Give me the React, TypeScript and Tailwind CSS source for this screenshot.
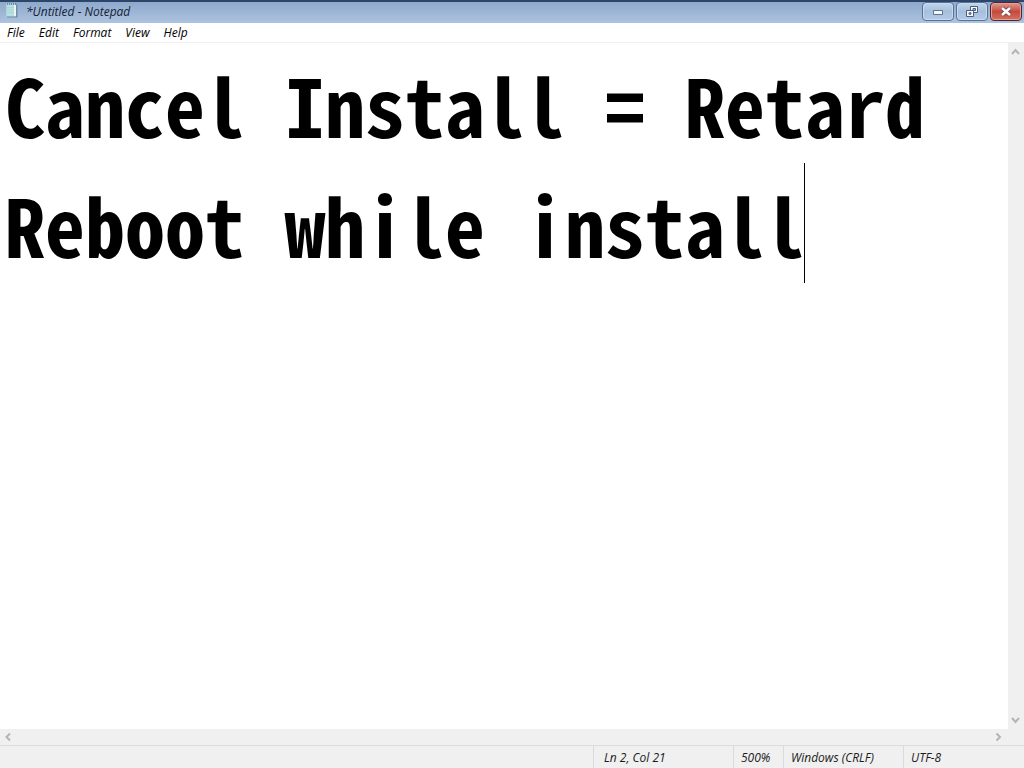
import { useState } from "react";

const menus = ["File", "Edit", "Format", "View", "Help"];

function NotepadIcon() {
  return (
    <svg className="h-4 w-4 shrink-0" viewBox="0 0 16 16" aria-hidden="true">
      <path d="M3 2.5h10.5v13H3z" fill="#6f8fa0" />
      <path d="M2 1.5h10v13H2z" fill="#a9d5dc" />
      <path d="M3 3h7v11H3z" fill="#b9dfe2" />
      <path d="M10 3h2v11h-2z" fill="#e9f6f4" />
      <path d="M3 5.5h7M3 8h7M3 10.5h7" stroke="#a3cfd6" strokeWidth="0.6" />
      <path d="M3 2h10" stroke="#5f7788" strokeWidth="1.4" strokeDasharray="1 1" />
    </svg>
  );
}

function ScrollArrow({ label, d }: { label: string; d: string }) {
  return (
    <button type="button" aria-label={label} className="flex h-4 w-4 items-center justify-center">
      <svg className="h-4 w-4" viewBox="0 0 16 16" fill="none" stroke="#b4b4b4" strokeWidth="2">
        <path d={d} />
      </svg>
    </button>
  );
}

const captionButton =
  "flex h-[19px] w-8 items-center justify-center rounded-sm border border-[#56749b] bg-linear-to-b from-[#c3d5ea] via-[#a6bfdd] to-[#b4cbe6] shadow-[inset_0_0_0_1px_#c9daee]";

export default function App() {
  const [text, setText] = useState("Cancel Install = Retard\nReboot while install");
  const lines = text.split("\n");
  const lastLine = lines[lines.length - 1];

  return (
    <div className="flex h-screen flex-col overflow-hidden bg-white font-['Open_Sans','Noto_Sans',sans-serif] text-xs text-black italic">
      <header className="flex h-[23px] shrink-0 items-start border-t-2 border-[#2c4568] bg-linear-to-b from-[#8ea9cc] to-[#adc3df] pr-0.5 pl-1">
        <NotepadIcon />
        <h1 className="ml-1.5 flex-1 text-xs leading-5 text-[#142138]">*Untitled - Notepad</h1>
        <div className="flex gap-0.5">
          <button type="button" aria-label="Minimize" className={captionButton}>
            <svg className="h-3 w-3" viewBox="0 0 12 12">
              <path d="M1.5 4.5h9v4h-9z" fill="#f5f9fe" stroke="#5b7492" />
            </svg>
          </button>
          <button type="button" aria-label="Restore" className={captionButton}>
            <svg className="h-3 w-3" viewBox="0 0 12 12" fill="#f5f9fe" stroke="#4b5f7a">
              <path d="M4.5 .5h7v6h-7z" />
              <path d="M7 2.5h2.5v2H7z" fill="#a6bfdd" />
              <path d="M.5 4.5h7v6h-7z" />
              <path d="M3 6.8h2v1.4H3z" fill="#a6bfdd" />
            </svg>
          </button>
          <button
            type="button"
            aria-label="Close"
            className="flex h-[19px] w-8 items-center justify-center rounded-sm border border-[#572332] bg-linear-to-b from-[#dc9a94] via-[#c44a3c] to-[#d5705c] shadow-[inset_0_0_0_1px_#e0a196]"
          >
            <svg className="h-3 w-3" viewBox="0 0 12 12">
              <path d="m2 2 8 7m0-7-8 7" stroke="#6b3944" strokeWidth="4" />
              <path d="m2 2 8 7m0-7-8 7" stroke="#ffffff" strokeWidth="2.6" />
            </svg>
          </button>
        </div>
      </header>

      <nav className="flex h-5 shrink-0 items-center gap-3.5 border-b border-[#f0f0f0] px-[7px]">
        {menus.map((menu) => (
          <button key={menu} type="button">
            {menu}
          </button>
        ))}
      </nav>

      <main className="flex min-h-0 flex-1">
        <div className="relative min-w-0 flex-1">
          <textarea
            aria-label="Document"
            wrap="off"
            spellCheck={false}
            value={text}
            onChange={(event) => setText(event.target.value)}
            className="block h-full w-full resize-none overflow-hidden bg-white pl-[5px] font-['Noto_Sans_Mono_CJK_SC','Liberation_Mono',monospace] text-[80px] leading-[120px] font-bold whitespace-pre text-black not-italic caret-transparent outline-none"
          />
          <div
            aria-hidden="true"
            className="pointer-events-none absolute top-[120px] left-1 flex h-[120px] w-max border-r border-black font-['Noto_Sans_Mono_CJK_SC','Liberation_Mono',monospace] text-[80px] leading-[120px] font-bold whitespace-pre not-italic"
          >
            <span className="invisible">{lastLine}</span>
          </div>
        </div>
        <div className="flex w-4 shrink-0 flex-col justify-between bg-[#f0f0f0]">
          <ScrollArrow label="Scroll up" d="m4 11 3.5-4 3.5 4" />
          <ScrollArrow label="Scroll down" d="m4 5 3.5 4 3.5-4" />
        </div>
      </main>

      <div className="flex h-4 shrink-0 items-center justify-between bg-[#f0f0f0] pr-[17px]">
        <ScrollArrow label="Scroll left" d="M10 4.5 6.5 8l3.5 3.5" />
        <ScrollArrow label="Scroll right" d="M5.5 4.5 9 8l-3.5 3.5" />
      </div>

      <footer className="flex h-[23px] shrink-0 items-center justify-end border-t border-[#dcdcdc] bg-[#f0f0f0] text-[#1c1c1c]">
        <span className="flex h-full w-[140px] items-center border-l border-[#dadada] pt-px pl-2.5">Ln 2, Col 21</span>
        <span className="flex h-full w-[50px] items-center border-l border-[#dadada] pt-px pl-[7px]">500%</span>
        <span className="flex h-full w-[120px] items-center border-l border-[#dadada] pt-px pl-[7px]">Windows (CRLF)</span>
        <span className="flex h-full w-[121px] items-center border-l border-[#dadada] pt-px pl-[7px]">UTF-8</span>
      </footer>
    </div>
  );
}
